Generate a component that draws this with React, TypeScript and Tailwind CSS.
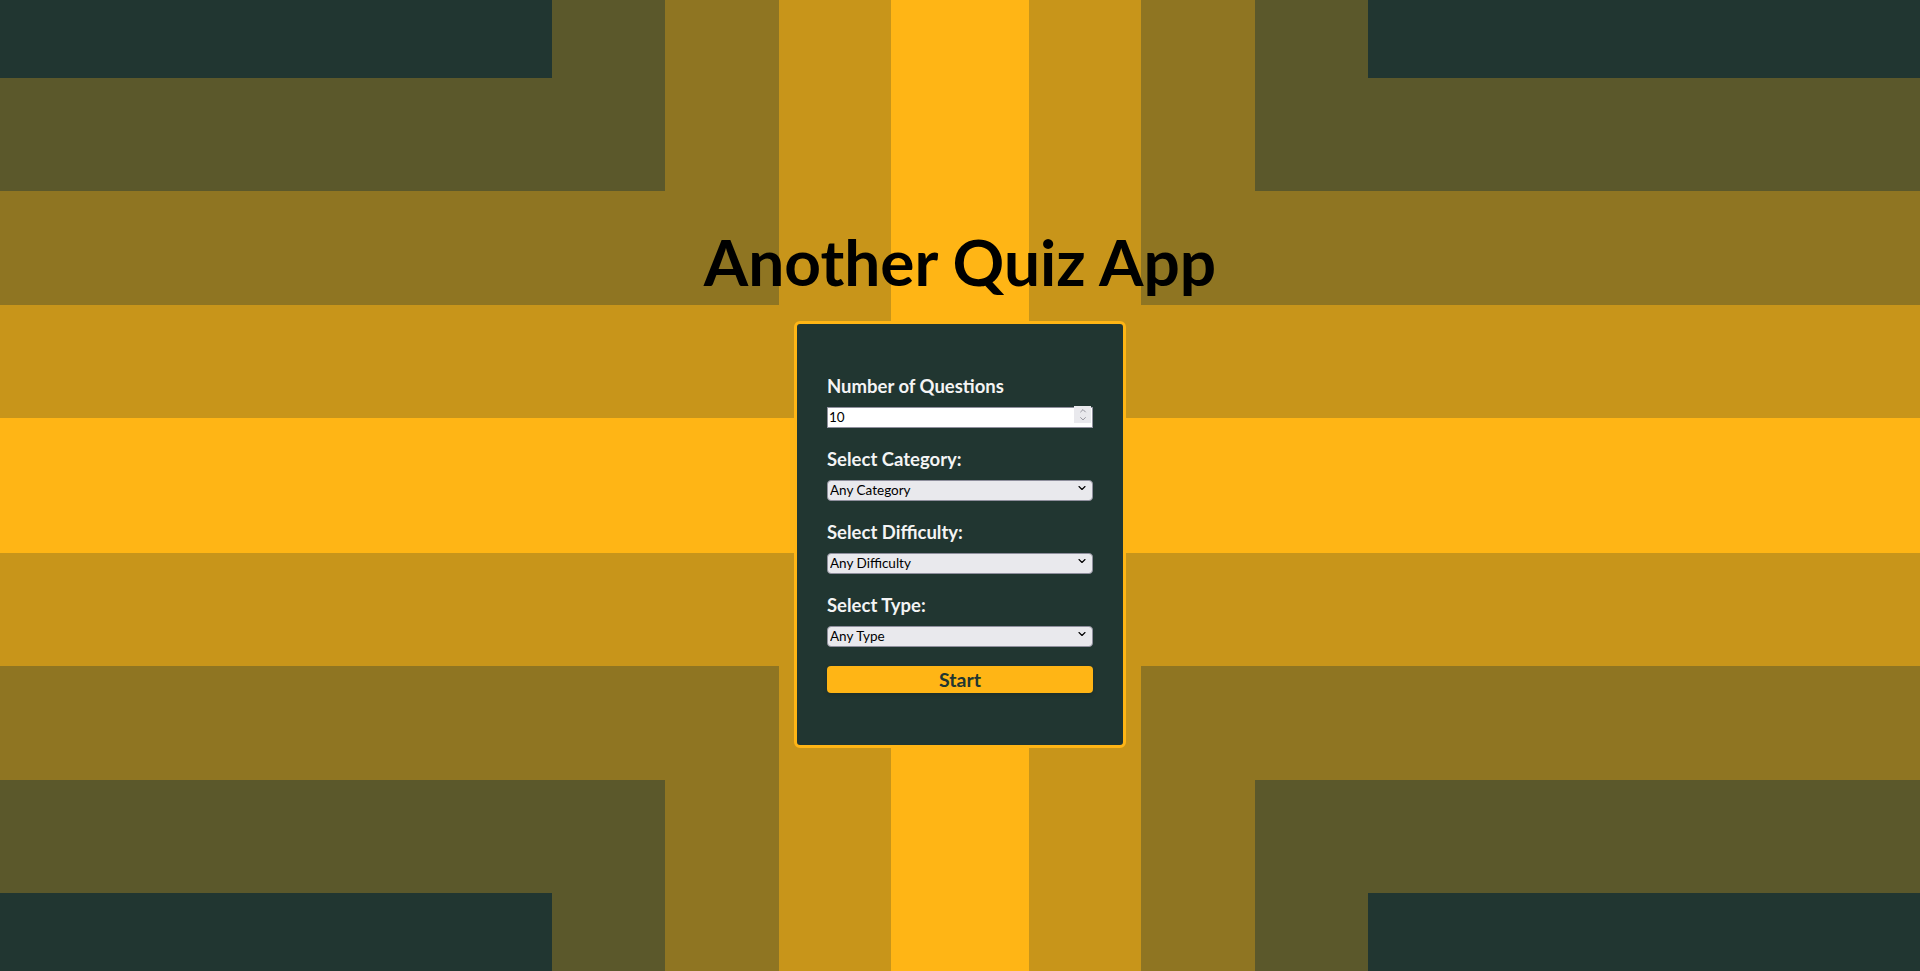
import { ChevronDown, ChevronUp } from "lucide-react";

const bands = [
  { fill: "#5b582b", x: 552, y: 78 },
  { fill: "#8f7522", x: 665, y: 191 },
  { fill: "#c8951a", x: 779, y: 305 },
  { fill: "#ffb515", x: 891, y: 418 },
];

function Backdrop() {
  return (
    <svg
      className="absolute inset-0 h-full w-full"
      viewBox="0 0 1920 971"
      preserveAspectRatio="none"
      aria-hidden="true"
    >
      <rect width="1920" height="971" fill="#213631" />
      {bands.map((b) => (
        <g key={b.fill} fill={b.fill}>
          <rect x={b.x} y="0" width={1920 - 2 * b.x} height="971" />
          <rect x="0" y={b.y} width="1920" height={971 - 2 * b.y} />
        </g>
      ))}
    </svg>
  );
}

function Field({ label, children }: { label: string; children: React.ReactNode }) {
  return (
    <div className="flex flex-col">
      <label className="mb-[6px] text-[18.5px] font-bold leading-6 text-[#f4f4f4]">{label}</label>
      {children}
    </div>
  );
}

function Select({ options }: { options: string[] }) {
  return (
    <div className="relative h-[21px]">
      <select className="h-full w-full appearance-none rounded-[4px] border border-[#8f8f9d] bg-[#e9e9ed] pl-[2px] text-[13.5px] leading-none text-black outline-none">
        {options.map((o) => (
          <option key={o}>{o}</option>
        ))}
      </select>
      <span className="pointer-events-none absolute inset-y-0 right-[5px] flex items-center">
        <ChevronDown className="h-[12px] w-[12px] text-black" strokeWidth={2.25} />
      </span>
    </div>
  );
}

export default function App() {
  return (
    <div className="relative h-screen w-full overflow-hidden font-['Lato',sans-serif]">
      <Backdrop />
      <main className="relative flex flex-col items-center pt-[229px]">
        <h1 className="text-[64px] font-bold leading-[66px] text-black">Another Quiz App</h1>
        <form className="mt-[26px] flex w-[332px] flex-col gap-[22px] rounded-md border-[3px] border-[#ffb515] bg-[#213631] px-[30px] pb-[52px] pt-[50px]">
          <Field label="Number of Questions">
            <div className="relative h-[21px]">
              <input
                type="number"
                defaultValue={10}
                className="h-full w-full border border-[#8f8f9d] bg-white pl-[1px] text-[13.5px] text-black outline-none [appearance:textfield] [&::-webkit-inner-spin-button]:appearance-none [&::-webkit-outer-spin-button]:appearance-none"
              />
              <div className="pointer-events-none absolute bottom-[2px] right-[2px] top-[2px] flex w-[17px] flex-col items-center justify-center bg-[#e9e9ed] text-[#7d7d88]">
                <ChevronUp className="-mb-[2px] h-[10px] w-[10px]" strokeWidth={2} />
                <ChevronDown className="h-[10px] w-[10px]" strokeWidth={2} />
              </div>
            </div>
          </Field>
          <Field label="Select Category:">
            <Select options={["Any Category", "General Knowledge", "Science & Nature", "History"]} />
          </Field>
          <Field label="Select Difficulty:">
            <Select options={["Any Difficulty", "Easy", "Medium", "Hard"]} />
          </Field>
          <Field label="Select Type:">
            <Select options={["Any Type", "Multiple Choice", "True / False"]} />
          </Field>
          <button
            type="button"
            className="h-[27px] w-full rounded-[4px] bg-[#ffb515] text-[19.5px] font-bold leading-none text-[#213631] shadow-[0_2px_4px_rgba(0,0,0,0.15)]"
          >
            Start
          </button>
        </form>
      </main>
    </div>
  );
}
